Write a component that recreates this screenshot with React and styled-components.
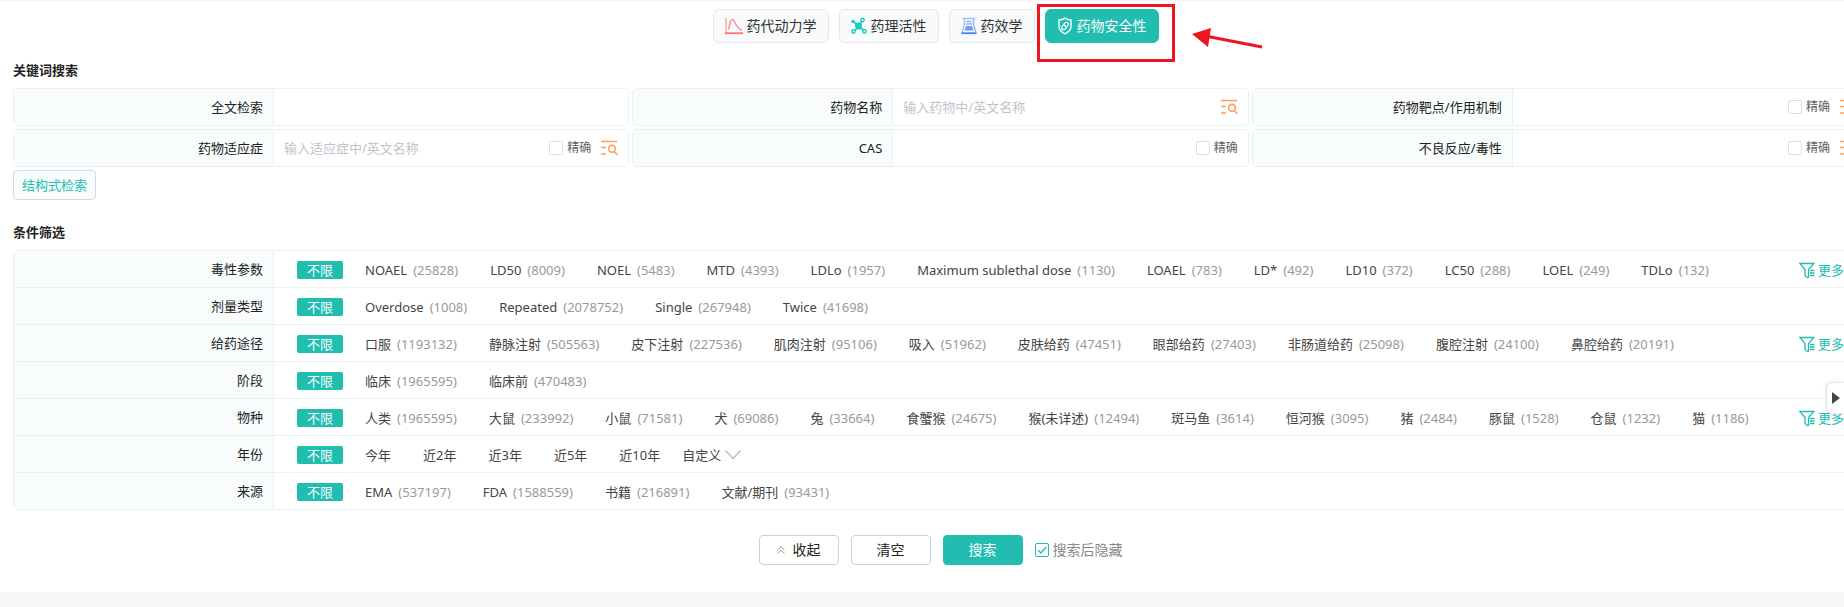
import React, { useState } from 'react';
import styled, { createGlobalStyle, css } from 'styled-components';

const GlobalStyle = createGlobalStyle`
  * {
    box-sizing: border-box;
  }

  body {
    margin: 0;
    background: #f6f7f9;
    color: #222;
    font: 13px/20px 'Noto Sans', 'Noto Sans CJK SC', sans-serif;
  }

  button,
  input {
    font: inherit;
    color: inherit;
  }
`;

// Styled Components
const Page = styled.main`
  position: relative;
  padding: 8px 0 27px 13px;
  border-top: 1px solid #f6f7f9;
  background: #fff;
  overflow: hidden;
`;

// runs on under the right edge, where the drawer opens
const Content = styled.div`
  margin-right: -24px;
`;

const TabBar = styled.nav`
  display: flex;
  justify-content: center;
  gap: 10px;
  padding-right: 10px;
`;

const Tab = styled.button`
  display: flex;
  align-items: center;
  gap: 4px;
  height: 34px;
  padding: 0 11px;
  border: 1px solid ${({ $active }) => ($active ? '#20bdb0' : '#e4e6eb')};
  border-radius: 6px;
  background: ${({ $active }) => ($active ? '#20bdb0' : '#f8fafc')};
  color: ${({ $active }) => ($active ? '#fff' : '#333')};
  font-size: 14px;
  white-space: nowrap;
  cursor: pointer;
`;

const TabAnchor = styled.div`
  position: relative;
`;

const Highlight = styled.span`
  position: absolute;
  top: -5px;
  left: -8px;
  width: 138px;
  height: 58px;
  border: 3px solid #ed1620;
  pointer-events: none;
`;

const Pointer = styled.svg`
  position: absolute;
  top: 19px;
  left: 147px;
  pointer-events: none;
`;

const SectionTitle = styled.h2`
  margin: 0;
  font-size: 13px;
  line-height: 20px;
  font-weight: 600;
`;

const SearchSection = styled.section`
  margin-top: 17px;
`;

const FieldGrid = styled.div`
  display: grid;
  grid-template-columns: repeat(3, 1fr);
  gap: 3px;
  margin: 8px 0 3px;
`;

const Field = styled.div`
  display: flex;
  height: 38px;
  border: 1px solid #e9f2f2;
  border-radius: 4px;
  overflow: hidden;
`;

const FieldLabel = styled.label`
  flex: none;
  width: 260px;
  padding: 0 10px;
  border-right: 1px solid #e9f2f2;
  background: #f8fcfd;
  line-height: 36px;
  text-align: right;
`;

const FieldInput = styled.input`
  flex: 1;
  min-width: 0;
  padding: 0 10px;
  border: 0;
  outline: 0;
  background: transparent;

  &::placeholder {
    color: #bfc3cc;
  }
`;

const FieldTools = styled.div`
  display: flex;
  flex: none;
  align-items: center;
  gap: 10px;
  padding-right: 10px;
`;

const CheckLabel = styled.label`
  display: flex;
  align-items: center;
  gap: 4px;
  color: ${({ $muted }) => ($muted ? '#888' : '#606266')};
  font-size: ${({ $muted }) => ($muted ? '14px' : '12px')};
`;

const Checkbox = styled.input`
  appearance: none;
  width: 14px;
  height: 14px;
  margin: 0;
  border: 1px solid #dcdfe6;
  border-radius: 2px;
  background: #fff;

  &:checked {
    border-color: #20bdb0;
  }
`;

const CheckBoxWrap = styled.span`
  display: grid;

  > * {
    grid-area: 1 / 1;
    place-self: center;
  }

  svg {
    pointer-events: none;
  }
`;

const IconButton = styled.button`
  display: flex;
  padding: 0;
  border: 0;
  background: none;
  cursor: pointer;
`;

const StructureButton = styled.button`
  height: 30px;
  padding: 0 8px;
  border: 1px solid #d3dae8;
  border-radius: 4px;
  background: #f8fcfd;
  color: #20bdb0;
  cursor: pointer;
`;

const FilterSection = styled.section`
  margin-top: 22px;
`;

const FilterTable = styled.div`
  margin-top: 8px;
  border: 1px solid #e9f2f2;
  border-radius: 4px;
`;

const FilterRow = styled.div`
  display: flex;
  height: 36px;

  & + & {
    height: 37px;
    border-top: 1px solid #e9f2f2;
  }
`;

const FilterName = styled.div`
  flex: none;
  width: 260px;
  padding: 8px 10px 0;
  border-right: 1px solid #e9f2f2;
  background: #f8fcfd;
  text-align: right;
`;

const FilterValues = styled.div`
  display: flex;
  flex: 1;
  align-items: center;
  min-width: 0;
  padding: 2px 0 0 23px;
  white-space: nowrap;
`;

const Unlimited = styled.button`
  height: 18px;
  margin-right: 22px;
  padding: 0 10px;
  border: 0;
  border-radius: 2px;
  background: #20bdb0;
  color: #fff;
  line-height: 18px;
`;

const FilterOption = styled.button`
  display: flex;
  align-items: center;
  gap: ${({ $expandable }) => ($expandable ? '4px' : '6px')};
  margin-right: ${({ $tight }) => ($tight ? '22px' : '32px')};
  padding: 0;
  border: 0;
  background: none;
  color: #444;
  cursor: pointer;
`;

const Count = styled.span`
  color: #999;
`;

const MoreButton = styled.button`
  display: flex;
  flex: none;
  align-items: center;
  gap: 3px;
  width: 68px;
  padding: 2px 0 0;
  border: 0;
  background: none;
  color: #20bdb0;
  white-space: nowrap;
  cursor: pointer;
`;

const Actions = styled.div`
  display: flex;
  justify-content: center;
  align-items: center;
  gap: 12px;
  margin-top: 25px;
`;

const ActionButton = styled.button`
  display: flex;
  align-items: center;
  justify-content: center;
  gap: 8px;
  width: 80px;
  height: 30px;
  padding: 0;
  border: 1px solid #c9d0de;
  border-radius: 4px;
  background: #fff;
  font-size: 14px;
  cursor: pointer;

  ${({ $primary }) =>
    $primary &&
    css`
      border-color: #20bdb0;
      background: #20bdb0;
      color: #fff;
    `}
`;

const DrawerHandle = styled.button`
  position: absolute;
  top: 381px;
  right: 0;
  display: flex;
  align-items: center;
  width: 18px;
  height: 32px;
  padding: 0 0 0 5px;
  border: 1px solid #e4e6eb;
  border-right: 0;
  border-radius: 6px 0 0 6px;
  background: #fff;
  box-shadow: 0 0 4px rgba(0, 0, 0, 0.1);
`;
// End of Styled Components

const CurveIcon = () => (
  <svg width="18" height="18" viewBox="0 0 18 18" fill="none">
    <path d="M1 1v15.5" stroke="#fcaea6" strokeWidth="1.5" />
    <path d="M0 16.2h18" stroke="#fb7470" strokeWidth="1.8" />
    <path d="M3.5 12.500C5 7 5 2.500 7.500 2.500S11 12.500 17 13" stroke="#fb9288" strokeWidth="1.500" />
  </svg>
);

const MoleculeIcon = () => (
  <svg width="16" height="18" viewBox="0 0 16 18" fill="none" stroke="#16cfc2" strokeWidth="1.400">
    <path d="M8 9L3 5M8 9l3-5M8 9l-4 4.500M8 9l4.500 4.500" strokeWidth="1.800" />
    <circle cx="7.500" cy="9" r="2.800" fill="#16cfc2" />
    <circle cx="2" cy="4.500" r="1" fill="#16cfc2" />
    <circle cx="11.500" cy="3" r="1.700" fill="#f8fafc" />
    <circle cx="2.500" cy="14.500" r="1.700" fill="#f8fafc" />
    <circle cx="13.500" cy="14.500" r="1.700" fill="#f8fafc" />
  </svg>
);

const FlaskIcon = () => (
  <svg width="16" height="18" viewBox="0 0 16 18" fill="none" strokeWidth="1.400">
    <path d="M1.500 1.500h13M3.500 2v5.500L1 16" stroke="#a3c0fb" />
    <path d="M12.500 2v5.500L15 16" stroke="#8fb2fa" />
    <path d="M5.500 4.500h5M5 7h6" stroke="#8fb2fa" />
    <path d="M5.500 9.500h5l1.500 3.500H4z" fill="#6b9bf8" stroke="#6b9bf8" strokeWidth="1" />
    <path d="M.5 16.200h15" stroke="#4a80f5" strokeWidth="1.800" />
  </svg>
);

const ShieldIcon = () => (
  <svg width="16" height="18" viewBox="0 0 16 18" fill="none" stroke="#fff" strokeWidth="1.400">
    <path d="M8 1.200c2 1.300 4 1.800 6 1.800v6.500c0 3.500-2.500 5.500-6 7.300-3.500-1.800-6-3.800-6-7.300V3c2 0 4-.5 6-1.800z" />
    <rect x="6" y="4.800" width="4" height="8.400" rx="2" strokeWidth="1.200" transform="rotate(38 8 9)" />
    <path d="M6.800 7.800l2.700 2.200" strokeWidth="1.200" />
  </svg>
);

const ListSearchIcon = () => (
  <svg width="17" height="16" viewBox="0 0 17 16" fill="none" stroke="#ff9f57" strokeWidth="1.600">
    <path d="M0 1.500h16M0 7.500h5M0 14h5" />
    <circle cx="11" cy="8.800" r="3.400" />
    <path d="M13.300 11.500l3 3.300" />
  </svg>
);

const FunnelIcon = () => (
  <svg width="16" height="17" viewBox="0 0 16 17" fill="none" stroke="#20bdb0" strokeWidth="1.300">
    <path d="M9 16L6 13.500V7.500L.8 1.500h14L9.500 7.500V16" />
    <path d="M11 8.500h4.500M11 11h4.500M11 13.500h4.500" />
  </svg>
);

const tabs = [
  { name: '药代动力学', Icon: CurveIcon },
  { name: '药理活性', Icon: MoleculeIcon },
  { name: '药效学', Icon: FlaskIcon },
  { name: '药物安全性', Icon: ShieldIcon, marked: true },
];

const fields = [
  { id: 'fulltext', label: '全文检索' },
  { id: 'drug', label: '药物名称', placeholder: '输入药物中/英文名称', list: true },
  { id: 'target', label: '药物靶点/作用机制', exact: true, list: true },
  { id: 'indication', label: '药物适应症', placeholder: '输入适应症中/英文名称', exact: true, list: true },
  { id: 'cas', label: 'CAS', exact: true },
  { id: 'adverse', label: '不良反应/毒性', exact: true, list: true },
];

const filters = [
  {
    name: '毒性参数',
    more: true,
    options: [
      ['NOAEL', 25828], ['LD50', 8009], ['NOEL', 5483], ['MTD', 4393], ['LDLo', 1957],
      ['Maximum sublethal dose', 1130], ['LOAEL', 783], ['LD*', 492], ['LD10', 372],
      ['LC50', 288], ['LOEL', 249], ['TDLo', 132],
    ],
  },
  {
    name: '剂量类型',
    options: [['Overdose', 1008], ['Repeated', 2078752], ['Single', 267948], ['Twice', 41698]],
  },
  {
    name: '给药途径',
    more: true,
    options: [
      ['口服', 1193132], ['静脉注射', 505563], ['皮下注射', 227536], ['肌肉注射', 95106],
      ['吸入', 51962], ['皮肤给药', 47451], ['眼部给药', 27403], ['非肠道给药', 25098],
      ['腹腔注射', 24100], ['鼻腔给药', 20191],
    ],
  },
  { name: '阶段', options: [['临床', 1965595], ['临床前', 470483]] },
  {
    name: '物种',
    more: true,
    options: [
      ['人类', 1965595], ['大鼠', 233992], ['小鼠', 71581], ['犬', 69086], ['兔', 33664],
      ['食蟹猴', 24675], ['猴(未详述)', 12494], ['斑马鱼', 3614], ['恒河猴', 3095],
      ['猪', 2484], ['豚鼠', 1528], ['仓鼠', 1232], ['猫', 1186],
    ],
  },
  {
    name: '年份',
    custom: true,
    options: [['今年'], ['近2年'], ['近3年'], ['近5年'], ['近10年']],
  },
  {
    name: '来源',
    options: [['EMA', 537197], ['FDA', 1588559], ['书籍', 216891], ['文献/期刊', 93431]],
  },
];

const SearchField = ({ id, label, placeholder, exact, list }) => (
  <Field>
    <FieldLabel htmlFor={id}>{label}</FieldLabel>
    <FieldInput id={id} placeholder={placeholder} />
    <FieldTools>
      {exact && (
        <CheckLabel>
          <Checkbox type="checkbox" />
          精确
        </CheckLabel>
      )}
      {list && (
        <IconButton type="button" aria-label={label}>
          <ListSearchIcon />
        </IconButton>
      )}
    </FieldTools>
  </Field>
);

const Filter = ({ name, options, more, custom }) => (
  <FilterRow>
    <FilterName>{name}</FilterName>
    <FilterValues>
      <Unlimited type="button">不限</Unlimited>
      {options.map(([text, count], index) => (
        <FilterOption key={text} type="button" $tight={custom && index === options.length - 1}>
          {text}
          {count && <Count>({count})</Count>}
        </FilterOption>
      ))}
      {custom && (
        <FilterOption type="button" $expandable>
          自定义
          <svg width="16" height="10" viewBox="0 0 16 10" fill="none" stroke="#c5c7cc" strokeWidth="1.800">
            <path d="M.5 .5L8 8.500l7.500-8" />
          </svg>
        </FilterOption>
      )}
    </FilterValues>
    {more && (
      <MoreButton type="button">
        <FunnelIcon />
        更多
      </MoreButton>
    )}
  </FilterRow>
);

const App = () => {
  const [activeTab, setActiveTab] = useState('药物安全性');
  const [hideAfterSearch, setHideAfterSearch] = useState(true);

  return (
    <Page>
      <GlobalStyle />
      <Content>
        <TabBar>
          {tabs.map(({ name, Icon, marked }) => (
            <TabAnchor key={name}>
              <Tab type="button" $active={name === activeTab} onClick={() => setActiveTab(name)}>
                <Icon />
                {name}
              </Tab>
              {marked && (
                <>
                  <Highlight />
                  <Pointer width="74" height="30" viewBox="0 0 74 30">
                    <path d="M16 8.500L70 19" stroke="#ed1620" strokeWidth="3" />
                    <path d="M0 6L19 0 16 19z" fill="#ed1620" />
                  </Pointer>
                </>
              )}
            </TabAnchor>
          ))}
        </TabBar>

        <SearchSection>
          <SectionTitle>关键词搜索</SectionTitle>
          <FieldGrid>
            {fields.map(field => (
              <SearchField key={field.id} {...field} />
            ))}
          </FieldGrid>
          <StructureButton type="button">结构式检索</StructureButton>
        </SearchSection>

        <FilterSection>
          <SectionTitle>条件筛选</SectionTitle>
          <FilterTable>
            {filters.map(filter => (
              <Filter key={filter.name} {...filter} />
            ))}
          </FilterTable>
        </FilterSection>

        <Actions>
          <ActionButton type="button">
            <svg width="8" height="8" viewBox="0 0 8 8" fill="none" stroke="#999">
              <path d="M.5 4L4 .7 7.500 4M.5 7.500L4 4.200l3.500 3.300" />
            </svg>
            收起
          </ActionButton>
          <ActionButton type="button">清空</ActionButton>
          <ActionButton type="button" $primary>搜索</ActionButton>
          <CheckLabel $muted>
            <CheckBoxWrap>
              <Checkbox
                type="checkbox"
                checked={hideAfterSearch}
                onChange={e => setHideAfterSearch(e.target.checked)}
              />
              {hideAfterSearch && (
                <svg width="10" height="8" viewBox="0 0 10 8" fill="none" stroke="#20bdb0" strokeWidth="1.200">
                  <path d="M1 4l3 3 5-6" />
                </svg>
              )}
            </CheckBoxWrap>
            搜索后隐藏
          </CheckLabel>
        </Actions>
      </Content>

      <DrawerHandle type="button" aria-label="展开">
        <svg width="8" height="12" viewBox="0 0 8 12" fill="#444">
          <path d="M0 0l8 6-8 6z" />
        </svg>
      </DrawerHandle>
    </Page>
  );
};

export default App;
